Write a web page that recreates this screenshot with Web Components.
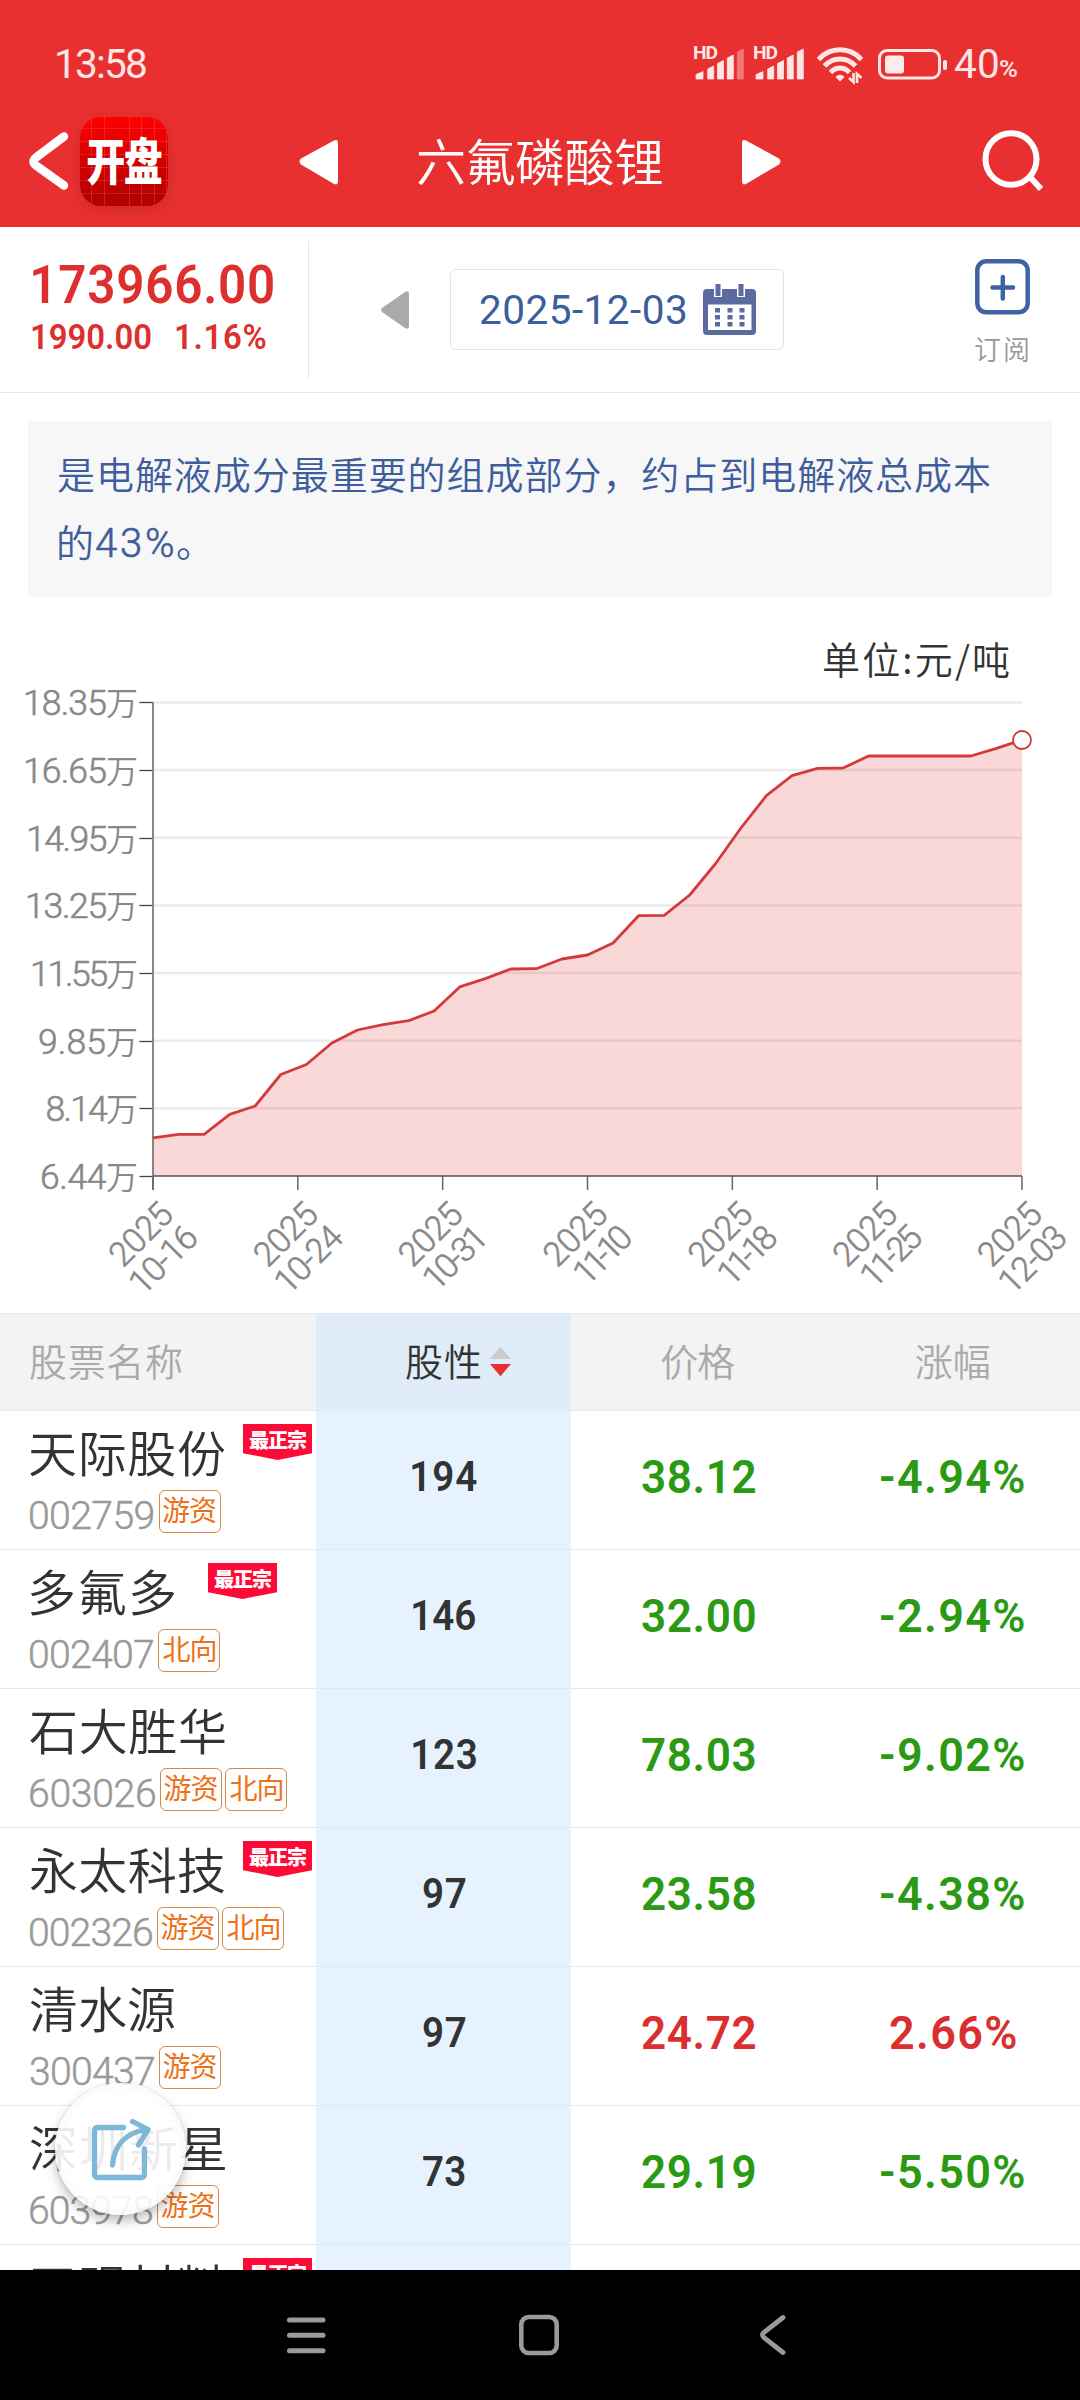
<!DOCTYPE html>
<html lang="zh-CN">
<head>
<meta charset="utf-8">
<title>六氟磷酸锂</title>
<style>
  html, body { margin: 0; padding: 0; background: #fff; }
  body { width: 1080px; height: 2400px; overflow: hidden; font-family: Roboto, "Noto Sans CJK SC", sans-serif; }
</style>
</head>
<body>
<app-screen></app-screen>
<script>
const STACK = 'Roboto, "Noto Sans CJK SC", sans-serif';
const CJK = '"Noto Sans CJK SC", sans-serif';
const ctx = document.createElement('canvas').getContext('2d');

class Base extends HTMLElement {
  connectedCallback() {
    if (this.shadowRoot) return;
    this.attachShadow({ mode: 'open' }).innerHTML = this.render();
  }
}

/* Text tracked to a given width; the box bottom is the baseline. */
class FitText extends HTMLElement {
  connectedCallback() {
    if (this.shadowRoot) return;
    const num = (k, d) => this.hasAttribute(k) ? parseFloat(this.getAttribute(k)) : d;
    const h = num('h', 30), size = num('size', h / 0.715), sx = num('sx', 1);
    const weight = num('weight', 400), text = this.textContent, n = [...text].length;
    const fam = this.hasAttribute('cjk') ? CJK : STACK;
    ctx.font = `${weight} ${size}px ${fam}`;
    const m = ctx.measureText(text);
    const ink = m.actualBoundingBoxLeft + m.actualBoundingBoxRight;
    const w = num('w', ink);
    const ls = n > 1 ? (w / sx - ink) / (n - 1) : 0;
    const lh = Math.round(size);
    const base = (lh + m.fontBoundingBoxAscent - m.fontBoundingBoxDescent) / 2;
    this.attachShadow({ mode: 'open' }).innerHTML = `<style>
      :host { display: block; flex: none; width: ${w}px; height: ${h}px; }
      span { display: block; width: max-content; white-space: nowrap; font: ${weight} ${size}px/${lh}px ${fam};
        letter-spacing: ${ls}px; transform-origin: 0 50%; -webkit-text-stroke: ${num('stroke', 0)}px currentColor;
        transform: translate(${m.actualBoundingBoxLeft * sx}px, ${h - base}px) scaleX(${sx}); }
    </style><span><slot></slot></span>`;
  }
}

class StatusBar extends Base {
  render() {
    const bars = dim => [[2, 71.6, 7], [13.7, 66, 6], [23.5, 60.5, 6], [33.3, 55, 6], [43.3, 49, 6]]
      .map(([x, y, w], i) => `<path d="M${x} ${79 - 47}V${y - 47 + 3}l${w} -3V${32}z" stroke-linejoin="round" stroke="#ffe6e6" stroke-width=".8" opacity="${dim && i === 4 ? .4 : 1}"/>`).join('');
    const signal = dim => `<div class="sig"><fit-text h="12.500" w="23.500" weight="700" sx="1.1">HD</fit-text>
      <svg width="50" height="33" viewBox="0 0 50 33" fill="#ffe6e6">${bars(dim)}</svg></div>`;
    return `<style>
      :host { display: flex; height: 110px; box-sizing: border-box; padding: 47px 61px 0 57px; color: #ffe6e6; }
      .time { margin-top: 2px; flex: 1; }
      .sig { width: 50px; height: 33px; display: grid; margin-right: 10px; }
      .sig > * { grid-area: 1 / 1; }
      .sig fit-text { margin-top: 0; }
      .wifi { margin: 0 15px 0 3px; } .bat { margin: 2px 8px 0 0; }
      .n { margin: 2px 2px 0 0; } .p { margin: 13px 0 0 0; }
    </style>
    <div class="time"><fit-text h="29" w="89" weight="400">13:58</fit-text></div>
    ${signal(true)}${signal(false)}
    <svg class="wifi" width="46" height="38" viewBox="0 0 46 38" fill="none" stroke="#ffe6e6" stroke-width="5">
      <path d="M1.5 12.5C13 -.5 33 -.5 44.500 12.500"/><path d="M7.500 19C16 9.500 30 9.500 38.500 19"/><path d="M13.500 25.500C19 19.500 27 19.500 32.500 25.500"/>
      <path d="M23 34.500l-4.500-4.500q4.500-4.500 9 0z" fill="#ffe6e6" stroke="none"/>
      <path d="M36.500 26v9l-4.500-4M40 36v-9l4.500 4" stroke-width="2.600"/>
    </svg>
    <svg class="bat" width="69" height="31" viewBox="0 0 69 31"><rect x="1.500" y="1.500" width="60" height="27.500" rx="7.500" fill="none" stroke="#ffe6e6" stroke-width="3"/><rect x="7" y="6.500" width="19" height="18" rx="3" fill="#ffeaea"/><rect x="65" y="11" width="4" height="10" rx="2" fill="#ffe6e6"/></svg>
    <fit-text class="n" h="29" w="43" weight="400">40</fit-text>
    <fit-text class="p" h="17" w="19" weight="500" sx="1.080">%</fit-text>`;
  }
}

class TitleBar extends Base {
  render() {
    const tri = 'M3 19.500Q0 22.500 3 25.500L36 45Q40 46.500 40 42V4Q40 -.5 36 1.500Z';
    return `<style>
      :host { display: flex; height: 117px; box-sizing: border-box; padding: 7px 36px 0 27px; color: #fff; }
      svg { display: block; flex: none; }
      .back { margin-top: 13px; }
      .logo { width: 88px; height: 89px; margin-left: 9px; flex: none; border-radius: 21px; box-sizing: border-box; padding: 63px 0 0 6.500px;
        box-shadow: 0 3px 14px rgba(110,20,20,.2);
        background: repeating-linear-gradient(90deg, transparent 0 11.500px, rgba(255,110,110,.3) 11.500px 12.500px),
          repeating-linear-gradient(0deg, transparent 0 12px, rgba(255,110,110,.25) 12px 13px), linear-gradient(#fe0000, #d30000 50%, #b00000); }
      .l { margin: 22px 80px 0 130px; } .r { margin: 22px 0 0 80px; transform: scaleX(-1); }
      .t { margin-top: 64px; } .s { margin: 12px 0 0 auto; }
    </style>
    <svg class="back" width="44" height="62" viewBox="0 0 44 62" fill="none" stroke="#fff" stroke-width="8.500" stroke-linecap="round" stroke-linejoin="round"><path d="M37 6.500L9 27.500Q4 31.500 9 35.500L37 55.500"/></svg>
    <div class="logo"><fit-text cjk h="0" size="50" w="75" sx=".78" weight="900">开盘</fit-text></div>
    <svg class="l" width="40" height="46" viewBox="0 0 40 46" fill="#fff"><path d="${tri}"/></svg>
    <fit-text class="t" cjk h="0" size="50" w="244" weight="350">六氟磷酸锂</fit-text>
    <svg class="r" width="40" height="46" viewBox="0 0 40 46" fill="#fff"><path d="${tri}"/></svg>
    <svg class="s" width="62" height="64" viewBox="0 0 62 64" fill="none" stroke="#fff" stroke-width="6"><ellipse cx="29" cy="30" rx="25.500" ry="25.800"/><path d="M48 48L59 60"/></svg>`;
  }
}

class QuotePanel extends Base {
  render() {
    let dots = '';
    for (const x of [12, 24.5, 36.5]) for (const y of [24, 31, 38]) dots += `<rect x="${x}" y="${y}" width="5" height="4.500"/>`;
    return `<style>
      :host { display: flex; height: 166px; box-sizing: border-box; border-bottom: 1px solid #e6e6e6; padding-top: 14px; }
      .q { width: 309px; height: 137px; box-sizing: border-box; border-right: 1px solid #e6e6e6; padding: 24px 0 0 33px; color: #dc2f2e; }
      .row { display: flex; gap: 25px; margin: 21px 0 0 -1px; }
      .tri { margin: 50px 41px 0 72px; }
      .date { width: 334px; height: 81px; box-sizing: border-box; border: 1px solid #e4e4e4; border-radius: 6px; margin-top: 28px; padding: 14px 0 0 29px; display: flex; color: #3d5d9c; }
      .date fit-text { margin: 11px 17px 0 0; }
      .sub { margin: 18px 0 0 191px; color: #999; }
      .sub fit-text { margin: 45px 0 0 0; }
      svg { display: block; flex: none; }
    </style>
    <div class="q"><fit-text h="38" w="240" weight="600" sx=".93">173966.00</fit-text>
      <div class="row"><fit-text h="25" w="119" weight="600" sx=".94">1990.00</fit-text><fit-text h="25" w="90" weight="600" sx=".94">1.16%</fit-text></div></div>
    <svg class="tri" width="28" height="38" viewBox="0 0 28 38" fill="#aaa"><path d="M1 17Q-1 19 1 21L24 37Q28 39 28 35V3Q28 -1 24 1Z"/></svg>
    <div class="date"><fit-text h="29" w="206" weight="400">2025-12-03</fit-text>
      <svg width="53" height="51" viewBox="0 0 53 51" fill="#5a6b9f"><rect y="5" width="53" height="46" rx="4"/><rect x="5" y="20.500" width="43.500" height="25.500" fill="#fff"/><rect x="11" y="-2" width="8" height="15" fill="#fff"/><rect x="34" y="-2" width="8" height="15" fill="#fff"/><rect x="12.500" width="5" height="12"/><rect x="35.500" width="5" height="12"/>${dots}</svg></div>
    <div class="sub"><svg width="55" height="56" viewBox="0 0 55 56" fill="none" stroke="#3f62a3" stroke-width="4.500"><rect x="2.300" y="2.300" width="50.400" height="51" rx="9"/><path d="M17.500 28.500h20.500M27.800 18v21.500" stroke-linecap="round"/></svg>
      <fit-text cjk h="0" size="27" w="53" weight="350">订阅</fit-text></div>`;
  }
}

class InfoNote extends Base {
  render() {
    return `<style>
      :host { display: block; margin: 28px 28px 0; height: 176px; box-sizing: border-box; background: #f7f7f8; padding: 68px 0 0 30px; color: #3d5d9c; }
      .l2 { display: flex; gap: 4px; margin: 68px 0 0 1px; }
    </style><fit-text cjk h="0" size="38" w="932" weight="350">是电解液成分最重要的组成部分，约占到电解液总成本</fit-text>
    <div class="l2"><fit-text cjk h="0" size="38" weight="350">的</fit-text><fit-text h="0" size="40" w="77" weight="350" stroke=".6">43%</fit-text><fit-text cjk h="0" size="38" weight="350">。</fit-text></div>`;
  }
}

class PriceChart extends Base {
  render() {
    const ys = [1137.8,1134.3,1134.3,1114.4,1106,1074.5,1064.5,1043,1030,1024.6,1020.7,1011,986.9,978.6,969,968.7,959,955,943,915.7,915.3,895,864,828,795.6,775.7,768.3,768,756,756,756,756,756,748.4,740];
    const O = 597, x0 = 153, x1 = 1022, top = 702.4 - O, step = 67.66, bot = 1176 - O;
    const pts = ys.map((y, i) => `${(x0 + i * (x1 - x0) / 34).toFixed(1)} ${(y - O).toFixed(1)}`);
    const labels = [['18.35',26],['16.65',26],['14.95',29],['13.25',28],['11.55',33],['9.85',41],['8.14',48.5],['6.44',43]];
    const dates = [['10-16',78],['10-24',77],['10-31',72],['11-10',64],['11-18',65],['11-25',68],['12-03',77]];
    let g = '';
    labels.forEach(([t, x], i) => {
      const y = top + i * step;
      if (i < 7) g += `<path d="M${x0} ${y}H${x1}" stroke="#ebebeb" stroke-width="2.500"/>`;
      g += `<path d="M139.500 ${Math.round(y) + .5}H153" stroke="#444" stroke-width="1.300"/>
        <text x="${x - 3}" y="${y + 13}" font-size="35.500" textLength="${138 - x + 3}" fill="#888" stroke="#888" stroke-width=".6">${t}<tspan font-size="32" stroke="none">万</tspan></text>`;
    });
    let d = '';
    dates.forEach(([t, w], i) => {
      const x = x0 + i * 144.83;
      d += `<path d="M${x} ${bot}v14" stroke="#666" stroke-width="1.500"/>
        <g fill="#888" stroke="#888" stroke-width=".6" font-size="34"><g transform="translate(${x + 21.5} ${1217 - O}) rotate(-45)"><text x="-73" textLength="74">2025</text></g>
        <g transform="translate(${x + 46.5} ${1240 - O}) rotate(-45)"><text x="${-w - 2}" textLength="${w + 3}">${t}</text></g></g>`;
    });
    return `<style>
      :host { display: block; height: 716px; }
      svg { display: block; font-family: ${STACK}; font-weight: 350; }
      .unit { color: #333; width: 185px; margin: 0 71px 0 auto; padding-top: 77px; height: 0; }
      .plot { margin-top: -77px; }
    </style>
    <div class="unit"><fit-text cjk h="0" size="38" w="185" weight="350">单位:元/吨</fit-text></div>
    <svg class="plot" width="1080" height="716" viewBox="0 0 1080 716">${g}
      <path d="M${x0} ${top}V${bot + 14}" stroke="#888" stroke-width="2"/>
      <path d="M${pts.join('L')}L${x1} ${bot}H${x0}Z" fill="#e62e2e" fill-opacity=".19"/>
      <path d="M${x0} ${bot}H${x1}" stroke="#555" stroke-width="1.500"/>
      <path d="M${pts.join('L')}" fill="none" stroke="#d43a3a" stroke-width="2.800" stroke-linejoin="round"/>
      <circle cx="${x1}" cy="${740 - O}" r="9" fill="#fff" stroke="#cc3838" stroke-width="1.800"/>${d}
    </svg>`;
  }
}

class StockHead extends Base {
  render() {
    return `<style>
      :host { display: grid; grid-template-columns: 316px 255px 254.500px 254.500px; height: 98px; box-sizing: border-box; background: #f3f3f3; color: #aaa; border: solid #e8e8e8; border-width: 1px 0; }
      div { padding-top: 62px; box-sizing: border-box; display: flex; justify-content: center; }
      .n { justify-content: flex-start; padding-left: 30px; }
      .s { background: #e0ecf8; color: #333; justify-content: flex-start; padding-left: 90px; }
      svg { margin: -30px 0 0 10px; }
    </style>
    <div class="n"><fit-text cjk h="0" size="38" w="152" weight="350">股票名称</fit-text></div>
    <div class="s"><fit-text cjk h="0" size="38" w="74" weight="350">股性</fit-text><svg width="21" height="31" viewBox="0 0 22 31"><path d="M0 13L11 0L22 13Z" fill="#ccc"/><path d="M0 18H22L11 31Z" fill="#e83030"/></svg></div>
    <div><fit-text cjk h="0" size="38" w="74" weight="350">价格</fit-text></div>
    <div><fit-text cjk h="0" size="38" w="74" weight="350">涨幅</fit-text></div>`;
  }
}

class TopBadge extends Base {
  render() {
    return `<style>
      :host { display: block; flex: none; width: 69px; height: 36px; background: #ff0a37; color: #fff; clip-path: polygon(0 0, 100% 0, 100% 81%, 50% 100%, 0 81%); box-sizing: border-box; padding: 24px 0 0 6px; }
    </style><fit-text cjk h="0" size="20" w="57" weight="800">最正宗</fit-text>`;
  }
}

class FundTag extends Base {
  render() {
    return `<style>
      :host { display: block; flex: none; width: 62px; height: 43px; box-sizing: border-box; border: 1.500px solid #d18a48; border-radius: 6px; padding: 30px 0 0 3.500px; color: #ee7118; background: #fff; }
    </style><fit-text cjk h="0" size="28" w="53" weight="400">${this.textContent}</fit-text>`;
  }
}

class StockRow extends Base {
  render() {
    const a = k => this.getAttribute(k);
    const name = a('name'), score = a('score');
    const tags = a('tags').split(',').filter(Boolean).map(t => `<fund-tag>${t}</fund-tag>`).join('');
    const up = !a('chg').startsWith('-');
    const sw = { '194': 64.5, '146': 62.5, '123': 63, '97': 43, '73': 41.5 }[score] || 43;
    return `<style>
      :host { display: grid; grid-template-columns: 316px 255px 254.500px 254.500px; height: 139px; box-sizing: border-box; border-bottom: 1px solid #e8e8e8; color: #333; }
      .n { padding: 0 0 0 30px; }
      .top { display: flex; height: 79px; }
      .top fit-text { margin-top: 61px; }
      top-badge { margin: 13px 0 0 ${a('gap') || 18}px; }
      .bot { display: flex; gap: 3px; }
      .bot .c { margin: 10.500px 2px 0 0; color: #999; }
      .v { display: flex; justify-content: center; padding-top: 49px; color: ${up ? '#d9302f' : '#2a9a14'}; }
      .s { background: #e6f3ff; color: #333; padding: 50px 0 0 1px; }
    </style>
    <div class="n"><div class="top"><fit-text cjk h="0" size="49" w="${name.length === 4 ? 195 : 145}" weight="350">${name}</fit-text>${this.hasAttribute('best') ? '<top-badge></top-badge>' : ''}</div>
      <div class="bot">${a('code') ? `<fit-text class="c" h="28" w="${a('cw')}" weight="350" stroke=".5">${a('code')}</fit-text>` : ''}${tags}</div></div>
    <div class="v s">${score ? `<fit-text h="30" w="${sw}" weight="600" sx=".92">${score}</fit-text>` : ''}</div>
    <div class="v">${a('price') ? `<fit-text h="33.500" w="113" weight="600" sx=".94">${a('price')}</fit-text>` : ''}</div>
    <div class="v">${a('chg') ? `<fit-text h="33.500" w="${up ? 126 : 143}" weight="600" sx=".96">${a('chg')}</fit-text>` : ''}</div>`;
  }
}

/* Floating share button over the list. */
class ShareFab extends Base {
  render() {
    return `<style>
      :host { position: absolute; left: 55px; top: 2083px; width: 131px; height: 132px; border-radius: 50%; box-sizing: border-box; padding: 33px 0 0 34px;
        background: radial-gradient(circle, rgba(255,255,255,.9) 60%, rgba(250,250,250,.9) 70%); box-shadow: 0 6px 12px rgba(0,0,0,.26), 0 0 3px rgba(0,0,0,.12); }
      svg { display: block; }
    </style><svg width="64" height="68" viewBox="0 0 64 68" fill="none" stroke="#7db8d8" stroke-width="5.300" stroke-linecap="round" stroke-linejoin="round">
      <path d="M34.500 11.500H9Q5.500 11.500 5.500 15V58Q5.500 61.500 9 61.500H52Q55.500 61.500 55.500 58V33"/>
      <path d="M23.500 49C25 30 36 17 57 13.500M43.500 5.500L59 13.500L49.500 29"/></svg>`;
  }
}

class NavBar extends Base {
  render() {
    return `<style>
      :host { display: flex; height: 130px; background: #000; box-sizing: border-box; padding: 44px 0 0 286px; position: relative; }
      svg { display: block; flex: none; }
    </style>
    <svg width="232" height="42" fill="none" stroke="#9a9a9a" stroke-width="5" stroke-linecap="round"><path d="M3.500 6H37M3.500 21.300H37M3.500 36.700H37"/></svg>
    <svg width="241" height="42" fill="none" stroke="#9a9a9a" stroke-width="4.600"><rect x="3.300" y="3" width="35.400" height="36" rx="7.500"/></svg>
    <svg width="30" height="42" fill="none" stroke="#9a9a9a" stroke-width="4.800" stroke-linecap="round" stroke-linejoin="round"><path d="M24 3.500L5 18.300Q2 21 5 23.700L24 38.500"/></svg>`;
  }
}

class AppScreen extends Base {
  render() {
    return `<style>
      :host { display: flex; flex-direction: column; width: 1080px; height: 2400px; overflow: hidden; position: relative; background: #fff; }
      header { background: #e93030; }
      main { height: 2043px; overflow: hidden; }
    </style>
    <header><status-bar></status-bar><title-bar></title-bar></header>
    <main>
      <quote-panel></quote-panel>
      <info-note></info-note>
      <price-chart></price-chart>
      <stock-head></stock-head>
      <stock-row name="天际股份" code="002759" cw="123.500" tags="游资" score="194" price="38.12" chg="-4.94%" best></stock-row>
      <stock-row name="多氟多" code="002407" cw="123" tags="北向" score="146" price="32.00" chg="-2.94%" best gap="33"></stock-row>
      <stock-row name="石大胜华" code="603026" cw="125" tags="游资,北向" score="123" price="78.03" chg="-9.02%"></stock-row>
      <stock-row name="永太科技" code="002326" cw="122" tags="游资,北向" score="97" price="23.58" chg="-4.38%" best></stock-row>
      <stock-row name="清水源" code="300437" cw="124" tags="游资" score="97" price="24.72" chg="2.66%"></stock-row>
      <stock-row name="深圳新星" code="603978" cw="122" tags="游资" score="73" price="29.19" chg="-5.50%"></stock-row>
      <stock-row name="天赐材料" code="" tags="" score="" price="" chg="" best></stock-row>
    </main>
    <share-fab></share-fab>
    <nav-bar></nav-bar>`;
  }
}

customElements.define('fit-text', FitText);
customElements.define('status-bar', StatusBar);
customElements.define('title-bar', TitleBar);
customElements.define('quote-panel', QuotePanel);
customElements.define('info-note', InfoNote);
customElements.define('price-chart', PriceChart);
customElements.define('stock-head', StockHead);
customElements.define('top-badge', TopBadge);
customElements.define('fund-tag', FundTag);
customElements.define('stock-row', StockRow);
customElements.define('share-fab', ShareFab);
customElements.define('nav-bar', NavBar);
customElements.define('app-screen', AppScreen);
</script>
</body>
</html>
